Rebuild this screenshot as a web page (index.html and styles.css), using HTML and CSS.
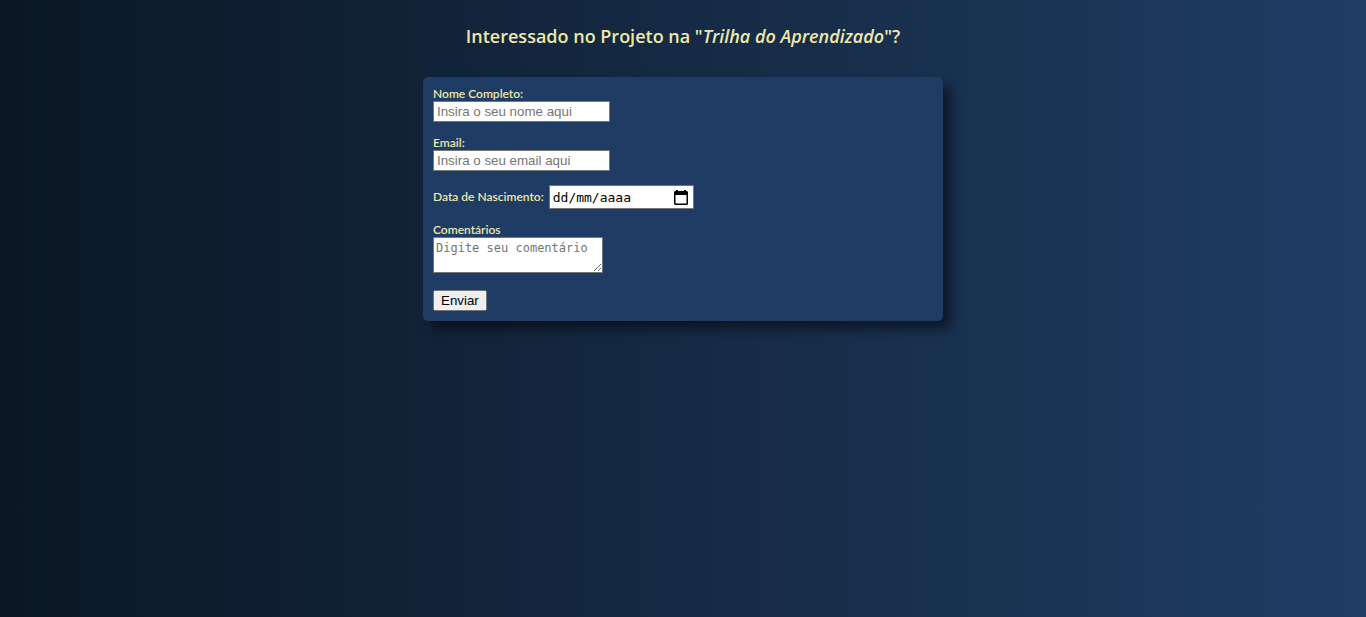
FILE: index.html
```html
<!DOCTYPE html>
<html lang="pt-BR">
<head>
<meta charset="utf-8">
<meta name="viewport" content="width=device-width, initial-scale=1">
<title>Trilha do Aprendizado</title>
<link rel="stylesheet" href="styles.css">
</head>
<body>
<h1 class="title">Interessado no Projeto na "<em>Trilha do Aprendizado</em>"?</h1>
<form class="form">
  <div class="field">
    <label for="nome">Nome Completo:</label>
    <input class="control" id="nome" type="text" placeholder="Insira o seu nome aqui">
  </div>
  <div class="field">
    <label for="email">Email:</label>
    <input class="control" id="email" type="email" placeholder="Insira o seu email aqui">
  </div>
  <div class="field field-inline">
    <label for="nascimento">Data de Nascimento:</label>
    <div class="date">
      <input class="date-input" id="nascimento" type="text" placeholder="dd/mm/aaaa">
      <button class="date-button" type="button" aria-label="Abrir calendário">
        <svg width="14" height="15" viewBox="0 0 14 15"><path fill="#000" fill-rule="evenodd" d="M2 0h2v1h6V0h2v1h1l1 1v12l-1 1H1l-1-1V2l1-1h1zM1.500 5v8.500h11V5z"/></svg>
      </button>
    </div>
  </div>
  <div class="field">
    <label for="comentarios">Comentários</label>
    <textarea class="comment" id="comentarios" placeholder="Digite seu comentário"></textarea>
  </div>
  <button class="submit" type="submit">Enviar</button>
</form>
</body>
</html>
```
FILE: styles.css
```css
* {
  box-sizing: border-box;
}

body {
  margin: 0;
  min-height: 100vh;
  padding: 24px 16px;
  background: linear-gradient(to right, #0b1724, #1f3d64);
  color: #eee8aa;
  font-family: "Trebuchet MS", Lato, sans-serif;
  font-size: 12px;
}

.title {
  margin: 0 0 28px;
  font-family: "Trebuchet MS", "Open Sans", sans-serif;
  font-size: 18px;
  line-height: 25px;
  font-weight: 600;
  text-align: center;
}

.form {
  display: flex;
  flex-direction: column;
  align-items: flex-start;
  gap: 14px;
  max-width: 520px;
  margin: 0 auto;
  padding: 10px;
  border-radius: 5px;
  background: #1f3c64;
  box-shadow: 8px 8px 12px rgba(0, 0, 0, 0.5);
  font-weight: 600;
  line-height: 14px;
}

.field {
  display: flex;
  flex-direction: column;
}

.field-inline {
  flex-direction: row;
  align-items: center;
  gap: 5px;
}

.control,
.date,
.comment,
.submit {
  border: 1px solid #767676;
  background: #fff;
  color: #000;
}

.control {
  width: 177px;
  height: 21px;
  padding: 1px 3px;
  font-family: "Liberation Sans", Arial, sans-serif;
}

.control::placeholder,
.comment::placeholder {
  color: #757575;
}

.date {
  display: flex;
  align-items: center;
  justify-content: space-between;
  width: 145px;
  height: 24px;
  padding: 0 5px 0 3px;
}

.date-input {
  width: 100px;
  padding: 0;
  border: 0;
  outline: 0;
  background: none;
  font: 13px "DejaVu Sans Mono", monospace;
}

.date-input::placeholder {
  color: #000;
}

.date-button {
  display: flex;
  padding: 0;
  border: 0;
  background: none;
}

.comment {
  width: 170px;
  height: 36px;
  padding: 3px 2px;
  font: 12px "DejaVu Sans Mono", monospace;
}

.submit {
  height: 21px;
  margin-top: 3px;
  padding: 0 7px;
  border-radius: 2px;
  background: #efefef;
  font-family: "Liberation Sans", Arial, sans-serif;
}
```
